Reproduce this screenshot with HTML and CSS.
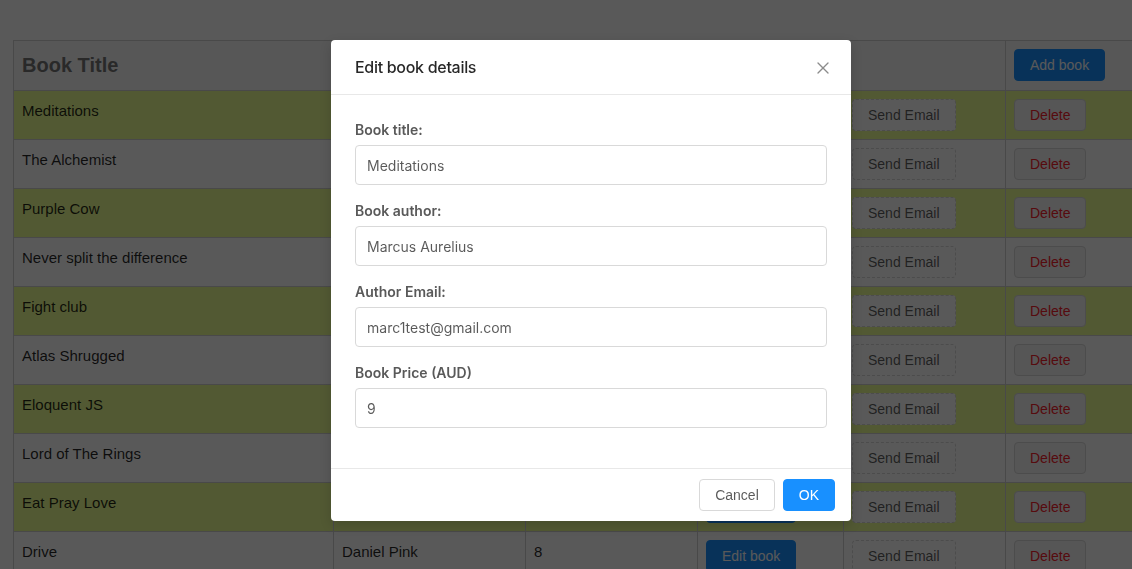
FILE: index.html
```html
<!DOCTYPE html>
<html lang="en">
<head>
<meta charset="utf-8">
<title>Books</title>
<link rel="stylesheet" href="styles.css">
</head>
<body>
<main class="page">
  <table class="books">
    <colgroup>
      <col class="c-title"><col class="c-author"><col class="c-price"><col class="c-edit"><col class="c-send"><col class="c-del">
    </colgroup>
    <thead>
      <tr>
        <th>Book Title</th>
        <th></th>
        <th></th>
        <th></th>
        <th></th>
        <th><button class="btn btn-primary">Add book</button></th>
      </tr>
    </thead>
    <tbody>
      <tr class="alt"><td>Meditations</td><td></td><td></td><td><button class="btn btn-primary">Edit book</button></td><td><button class="btn btn-dashed">Send Email</button></td><td><button class="btn btn-danger">Delete</button></td></tr>
      <tr><td>The Alchemist</td><td></td><td></td><td><button class="btn btn-primary">Edit book</button></td><td><button class="btn btn-dashed">Send Email</button></td><td><button class="btn btn-danger">Delete</button></td></tr>
      <tr class="alt"><td>Purple Cow</td><td></td><td></td><td><button class="btn btn-primary">Edit book</button></td><td><button class="btn btn-dashed">Send Email</button></td><td><button class="btn btn-danger">Delete</button></td></tr>
      <tr><td>Never split the difference</td><td></td><td></td><td><button class="btn btn-primary">Edit book</button></td><td><button class="btn btn-dashed">Send Email</button></td><td><button class="btn btn-danger">Delete</button></td></tr>
      <tr class="alt"><td>Fight club</td><td></td><td></td><td><button class="btn btn-primary">Edit book</button></td><td><button class="btn btn-dashed">Send Email</button></td><td><button class="btn btn-danger">Delete</button></td></tr>
      <tr><td>Atlas Shrugged</td><td></td><td></td><td><button class="btn btn-primary">Edit book</button></td><td><button class="btn btn-dashed">Send Email</button></td><td><button class="btn btn-danger">Delete</button></td></tr>
      <tr class="alt"><td>Eloquent JS</td><td></td><td></td><td><button class="btn btn-primary">Edit book</button></td><td><button class="btn btn-dashed">Send Email</button></td><td><button class="btn btn-danger">Delete</button></td></tr>
      <tr><td>Lord of The Rings</td><td></td><td></td><td><button class="btn btn-primary">Edit book</button></td><td><button class="btn btn-dashed">Send Email</button></td><td><button class="btn btn-danger">Delete</button></td></tr>
      <tr class="alt"><td>Eat Pray Love</td><td></td><td></td><td><button class="btn btn-primary">Edit book</button></td><td><button class="btn btn-dashed">Send Email</button></td><td><button class="btn btn-danger">Delete</button></td></tr>
      <tr><td>Drive</td><td>Daniel Pink</td><td>8</td><td><button class="btn btn-primary">Edit book</button></td><td><button class="btn btn-dashed">Send Email</button></td><td><button class="btn btn-danger">Delete</button></td></tr>
    </tbody>
  </table>
</main>

<div class="mask"></div>
<div class="modal" role="dialog" aria-labelledby="modal-title">
  <div class="modal-header">
    <div class="modal-title" id="modal-title">Edit book details</div>
    <button class="modal-close" aria-label="Close">
      <svg width="12" height="12" viewBox="0 0 12 12" aria-hidden="true"><path d="M1 1 L11 11 M11 1 L1 11" stroke="#8c8c8c" stroke-width="1.3" fill="none" stroke-linecap="round"/></svg>
    </button>
  </div>
  <form class="modal-body">
    <div class="field">
      <label class="field-label" for="f-title">Book title:</label>
      <input class="field-input" id="f-title" type="text" value="Meditations">
    </div>
    <div class="field">
      <label class="field-label" for="f-author">Book author:</label>
      <input class="field-input" id="f-author" type="text" value="Marcus Aurelius">
    </div>
    <div class="field">
      <label class="field-label" for="f-email">Author Email:</label>
      <input class="field-input" id="f-email" type="text" value="marc1test@gmail.com">
    </div>
    <div class="field">
      <label class="field-label" for="f-price">Book Price (AUD)</label>
      <input class="field-input" id="f-price" type="text" value="9">
    </div>
  </form>
  <div class="modal-footer">
    <button class="btn btn-default">Cancel</button>
    <button class="btn btn-primary">OK</button>
  </div>
</div>
</body>
</html>
```

FILE: styles.css
```css
html, body {
  margin: 0;
  padding: 0;
  overflow: hidden;
  background: #ffffff;
}

body {
  font-family: "Liberation Sans", Arial, sans-serif;
  color: rgba(0, 0, 0, 0.85);
}

.page {
  padding: 40px 0 0 13px;
}

.books {
  border-collapse: collapse;
  table-layout: fixed;
  width: 1132px;
}

.c-title { width: 320px; }
.c-author { width: 192px; }
.c-price { width: 172px; }
.c-edit { width: 146px; }
.c-send { width: 162px; }
.c-del { width: 140px; }

.books th,
.books td {
  border: 1px solid #d0d0d0;
  padding: 8px;
  text-align: left;
}

.books th {
  background: #fafafa;
  font-size: 20px;
  font-weight: bold;
  color: #777;
  vertical-align: middle;
  line-height: 33px;
}

.books td {
  font-size: 15px;
  line-height: 23px;
  vertical-align: top;
  color: rgba(0, 0, 0, 0.85);
  background: #ffffff;
}

.books tr.alt td {
  background: #eaff92;
}

.btn {
  display: inline-block;
  height: 32px;
  padding: 0 15px;
  font-family: "Liberation Sans", Arial, sans-serif;
  font-size: 14px;
  font-weight: normal;
  line-height: 30px;
  border-radius: 4px;
  border: 1px solid #d9d9d9;
  background: #fff;
  color: rgba(0, 0, 0, 0.65);
  cursor: pointer;
  vertical-align: top;
  white-space: nowrap;
}

.btn-primary {
  background: #1890ff;
  border-color: #1890ff;
  color: #fff;
}

.btn-dashed {
  border-style: dashed;
}

.btn-danger {
  background: #f5f5f5;
  color: #f5222d;
}

.mask {
  position: fixed;
  top: 0;
  left: 0;
  width: 100%;
  height: 100%;
  z-index: 10;
  background-color: rgba(0, 0, 0, 0.65);
}

.modal {
  position: fixed;
  top: 40px;
  left: 331px;
  width: 520px;
  z-index: 20;
  background: #fff;
  border-radius: 4px;
  box-shadow: 0 4px 12px rgba(0, 0, 0, 0.15);
  font-family: "Inter", "Liberation Sans", sans-serif;
}

.modal-header {
  position: relative;
  padding: 16px 24px;
  border-bottom: 1px solid #e8e8e8;
}

.modal-title {
  font-size: 16px;
  line-height: 22px;
  font-weight: 500;
  color: rgba(0, 0, 0, 0.85);
  letter-spacing: -0.3px;
}

.modal-close {
  position: absolute;
  top: 0;
  right: 0;
  width: 56px;
  height: 56px;
  border: 0;
  background: transparent;
  padding: 0;
  display: flex;
  align-items: center;
  justify-content: center;
}

.modal-body {
  padding: 24px 24px 25px;
  margin: 0;
}

.field {
  display: flex;
  flex-direction: column;
  margin-bottom: 15px;
}

.field-label {
  font-size: 14px;
  line-height: 22px;
  font-weight: 600;
  color: #595959;
  margin-bottom: 4px;
}

.field-input {
  box-sizing: border-box;
  height: 40px;
  padding: 0 11px;
  border: 1px solid #d9d9d9;
  border-radius: 4px;
  font-family: "Inter", "Liberation Sans", sans-serif;
  font-size: 14px;
  color: rgba(0, 0, 0, 0.65);
  background: #fff;
}

.modal-footer {
  border-top: 1px solid #e8e8e8;
  padding: 10px 16px;
  display: flex;
  justify-content: flex-end;
  gap: 8px;
}
```
